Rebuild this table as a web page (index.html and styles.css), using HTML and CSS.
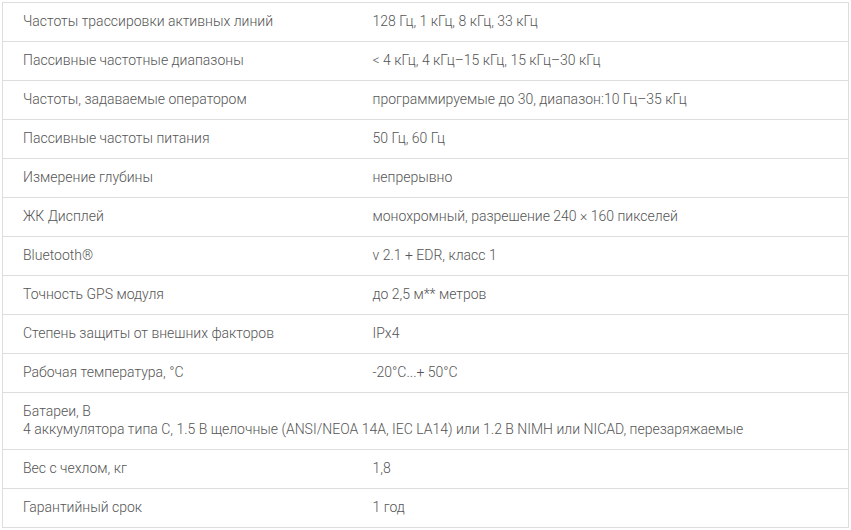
FILE: index.html
```html
<!DOCTYPE html>
<html lang="ru">
<head>
<meta charset="utf-8">
<link rel="stylesheet" href="styles.css">
</head>
<body>
<table class="specs">
  <colgroup><col class="c1"><col class="c2"></colgroup>
  <tbody>
    <tr><td>Частоты трассировки активных линий</td><td>128 Гц, 1 кГц, 8 кГц, 33 кГц</td></tr>
    <tr><td>Пассивные частотные диапазоны</td><td>&lt; 4 кГц, 4 кГц–15 кГц, 15 кГц–30 кГц</td></tr>
    <tr><td>Частоты, задаваемые оператором</td><td>программируемые до 30, диапазон:10 Гц–35 кГц</td></tr>
    <tr><td>Пассивные частоты питания</td><td>50 Гц, 60 Гц</td></tr>
    <tr><td>Измерение глубины</td><td>непрерывно</td></tr>
    <tr><td>ЖК Дисплей</td><td>монохромный, разрешение 240 × 160 пикселей</td></tr>
    <tr><td>Bluetooth®</td><td>v 2.1 + EDR, класс 1</td></tr>
    <tr><td>Точность GPS модуля</td><td>до 2,5 м** метров</td></tr>
    <tr><td>Степень защиты от внешних факторов</td><td>IPx4</td></tr>
    <tr><td>Рабочая температура, °C</td><td>-20°C...+ 50°C</td></tr>
    <tr><td colspan="2">Батареи, В<br>4 аккумулятора типа C, 1.5 В щелочные (ANSI/NEOA 14A, IEC LA14) или 1.2 В NIMH или NICAD, перезаряжаемые</td></tr>
    <tr><td>Вес с чехлом, кг</td><td>1,8</td></tr>
    <tr><td>Гарантийный срок</td><td>1 год</td></tr>
  </tbody>
</table>
</body>
</html>
```
FILE: styles.css
```css
html, body {
  margin: 0;
  padding: 0;
  background: #fff;
}
body {
  padding: 2px;
  font-family: Roboto, "Liberation Sans", sans-serif;
  font-size: 14px;
  font-weight: 300;
  line-height: 18px;
  color: #555;
}
.specs {
  border-collapse: collapse;
  width: 847px;
  table-layout: fixed;
}
.specs .c1 { width: 350px; }
.specs td {
  border: 1px solid #ddd;
  border-left: none;
  border-right: none;
  padding: 9px 20px 11px;
  vertical-align: middle;
  text-align: left;
}
.specs tr td:first-child { border-left: 1px solid #ddd; }
.specs tr td:last-child { border-right: 1px solid #ddd; }
```
